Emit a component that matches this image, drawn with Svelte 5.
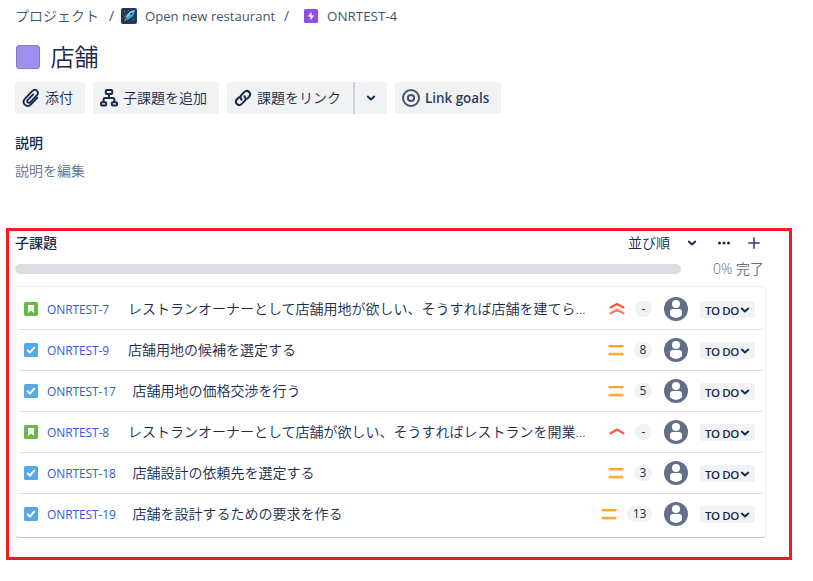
<script>
  const issues = [
    { key: 'ONRTEST-7', type: 'story', title: 'レストランオーナーとして店舗用地が欲しい、そうすれば店舗を建てら...', gap: 128, priority: 'highest', points: '-' },
    { key: 'ONRTEST-9', type: 'task', title: '店舗用地の候補を選定する', gap: 128, priority: 'medium', points: '8' },
    { key: 'ONRTEST-17', type: 'task', title: '店舗用地の価格交渉を行う', gap: 132.5, priority: 'medium', points: '5' },
    { key: 'ONRTEST-8', type: 'story', title: 'レストランオーナーとして店舗が欲しい、そうすればレストランを開業...', gap: 128, priority: 'high', points: '-' },
    { key: 'ONRTEST-18', type: 'task', title: '店舗設計の依頼先を選定する', gap: 132.5, priority: 'medium', points: '3' },
    { key: 'ONRTEST-19', type: 'task', title: '店舗を設計するための要求を作る', gap: 132.5, priority: 'medium', points: '13' }
  ];
</script>

{#snippet chevron()}
  <svg class="chev" width="10" height="8" viewBox="0 0 10 8"><path d="M1.8 2.6 5 5.4 8.2 2.6" fill="none" stroke="currentColor" stroke-width="2" stroke-linecap="round" stroke-linejoin="round" /></svg>
{/snippet}

<main>
  <nav>
    <span class="c1">プロジェクト</span>
    <span class="s1">/</span>
    <svg class="rocket" width="16" height="16" viewBox="0 0 16 16">
      <rect width="16" height="16" rx="2" fill="#243858" />
      <path d="M3 8.7 5.6 6.5 8.5 9.8 6.7 12.8 6 10.3 4.5 9.2Z" fill="#2684b8" />
      <path d="M13.8 2C9.6 2.2 6.3 5.2 5 9.2l1.9 1.9C11 9.6 13.7 6.4 13.8 2Z" fill="#79c7e3" />
      <path d="M13.8 2 5.8 10.1l1.1 1C11 9.6 13.7 6.4 13.8 2Z" fill="#42a5ce" />
      <circle cx="10.3" cy="5.8" r="1.1" fill="#243858" />
      <path d="M4.8 10 3 13.2l3.3-1.7Z" fill="#c78a7c" />
      <path d="M3 3h1v1H3zM12 11h1v1h-1zM7 2h.7v.7H7z" fill="#7a8ba8" />
    </svg>
    <span class="c2">Open new restaurant</span>
    <span class="s2">/</span>
    <svg class="epic" width="14" height="14" viewBox="0 0 14 14"><rect width="14" height="14" rx="1.6" fill="#904ee2" /><path d="M7.5 2.8 3.8 7.4h2.7v3.8l3.8-4.7H7.5Z" fill="#fff" /></svg>
    <span class="c3">ONRTEST-4</span>
  </nav>

  <header><i></i><h1>店舗</h1></header>

  <div class="actions">
    <button class="attach">
      <svg width="20" height="20" viewBox="0 0 20 20" fill="none" stroke="currentColor" stroke-width="1.9" stroke-linecap="round"><path d="M12.2 6.4 6.8 11.9c-1.7 1.8.6 4.1 2.3 2.4l6.6-6.8c3.2-3.4-1.2-7.6-4.5-4.3L4.3 10.3c-4.5 4.8 1.4 10.3 5.9 5.8l6.1-6.3" /></svg>
      <span>添付</span>
    </button>
    <button class="child">
      <svg width="20" height="20" viewBox="0 0 20 20" fill="none" stroke="currentColor" stroke-width="2" stroke-linejoin="round"><rect x="6.8" y="2" width="6.4" height="4" rx="1" /><rect x="2" y="14.2" width="5.2" height="3.2" rx="1" /><rect x="12.8" y="14.2" width="5.2" height="3.2" rx="1" /><path d="M10 6v4M4.6 14v-2.6q0-1.4 1.4-1.4h8q1.4 0 1.4 1.4V14" /></svg>
      <span>子課題を追加</span>
    </button>
    <div class="split">
      <button class="link">
        <svg width="20" height="20" viewBox="0 0 20 20" fill="none" stroke="currentColor" stroke-width="2" stroke-linecap="round"><path d="M8.6 11.8C6.8 10 7.3 8 8.6 6.7l2.7-2.6c3.3-3.1 7.9 1.3 4.8 4.6l-2.2 2.2" /><path d="M11.4 8.2c1.8 1.8 1.3 3.8 0 5.1l-2.7 2.6c-3.3 3.1-7.9-1.3-4.8-4.6l2.2-2.2" /></svg>
        <span>課題をリンク</span>
      </button>
      <button class="more">{@render chevron()}</button>
    </div>
    <button class="goals">
      <svg width="20" height="20" viewBox="0 0 20 20" fill="none" stroke="#44546f" stroke-width="2"><circle cx="10" cy="10" r="8" /><circle cx="10" cy="10" r="3.1" /></svg>
      <span>Link goals</span>
    </button>
  </div>

  <h2>説明</h2>
  <p>説明を編集</p>

  <section>
    <div class="head">
      <h2>子課題</h2>
      <div class="tools">
        <span class="sort">並び順</span>
        {@render chevron()}
        <svg class="dots" width="14" height="6" viewBox="0 0 14 6" fill="currentColor"><circle cx="2.5" cy="3" r="1.5" /><circle cx="7" cy="3" r="1.5" /><circle cx="11.5" cy="3" r="1.5" /></svg>
        <svg class="plus" width="12" height="12" viewBox="0 0 12 12"><path d="M6 .8v10.4M.8 6h10.4" stroke="#2c3e5d" stroke-width="1.5" stroke-linecap="round" /></svg>
      </div>
    </div>
    <div class="progress"><div class="bar"></div><span>0% 完了</span></div>
    <ul>
      {#each issues as issue}
        <li>
          <svg class="type" width="14" height="14" viewBox="0 0 14 14">
            {#if issue.type === 'story'}
              <rect width="14" height="14" rx="1.6" fill="#68b946" /><path d="M4 3h6v8L7 8.5 4 11Z" fill="#fff" /><path d="M6 5h2v2.4H6Z" fill="#d9eecf" />
            {:else}
              <rect width="14" height="14" rx="1.6" fill="#55aae5" /><path d="m3.7 7.3 2.2 2.2 4.3-4.9" fill="none" stroke="#fff" stroke-width="1.9" stroke-linecap="round" stroke-linejoin="round" />
            {/if}
          </svg>
          <a style:width="{issue.gap - 47}px">{issue.key}</a>
          <span class="title">{issue.title}</span>
          <svg class="prio" width="16" height="16" viewBox="0 0 16 16" fill="none" stroke-linecap="round" stroke-linejoin="round">
            {#if issue.priority === 'medium'}
              <path d="M1 4.3h14M1 11.9h14" stroke="#ffd08a" stroke-width="2.8" stroke-linecap="butt" /><path d="M1.2 3.9h13.6M1.2 12.2h13.6" stroke="#fba528" stroke-width="2" />
            {:else if issue.priority === 'highest'}
              <path d="m1.6 6.4 6.4-3.4 6.4 3.4" stroke="#ff5630" stroke-width="2.3" /><path d="m1.6 12.2 6.4-3.4 6.4 3.4" stroke="#ff7c5e" stroke-width="2.3" />
            {:else}
              <path d="m1.6 9.2 6.4-3.6 6.4 3.6" stroke="#ff5c40" stroke-width="2.3" />
            {/if}
          </svg>
          <span class="points" class:dash={issue.points === '-'} class:wide={issue.points.length > 1}>{issue.points}</span>
          <svg class="avatar" width="24" height="24" viewBox="0 0 24 24"><circle cx="12" cy="12" r="12" fill="#626f86" /><circle cx="12" cy="7" r="4" fill="#fff" /><path d="M6 15q0-3 3-3h6q3 0 3 3v3.3q-2.6 2.7-6 2.7t-6-2.7Z" fill="#fff" /></svg>
          <span class="status"><b>TO DO</b>{@render chevron()}</span>
        </li>
      {/each}
    </ul>
  </section>
</main>

<style>
  :global(body) { margin: 0; background: #fff; }
  main { box-sizing: border-box; width: 813px; height: 581px; overflow: hidden; font: 350 14px/20px "Open Sans", "Noto Sans CJK JP", sans-serif; color: #172b4d; white-space: nowrap; }
  * { box-sizing: border-box; }
  svg { display: block; flex: none; }
  nav { display: flex; align-items: center; height: 32px; padding-left: 15px; color: #44546f; font-weight: 400; }
  nav span { flex: none; }
  .c1 { width: 94px; font-weight: 350; }
  .s1 { width: 12px; }
  .c2 { width: 139px; margin-left: 8px; font-size: 13.1px; }
  .s2 { width: 20px; }
  .c3 { margin-left: 9px; font-size: 13.4px; }
  header { display: flex; align-items: center; height: 50px; padding-left: 16px; }
  header i { width: 24px; height: 24px; border: 1px solid #8777c9; border-radius: 3px; background: #9f8fef; }
  h1 { margin: -1px 0 0 10.5px; font-size: 24px; font-weight: 350; line-height: 28px; }
  .actions { display: flex; gap: 8px; height: 32px; padding-left: 15px; }
  button { display: flex; align-items: center; height: 32px; padding: 0 0 0 6px; border: 0; border-radius: 3px; background: #f1f2f4; font: inherit; color: #172b4d; }
  button span { margin-left: 4px; }
  .attach { width: 70px; }
  .child { width: 126px; }
  .split { display: flex; width: 160px; }
  .link { width: 126px; border-radius: 3px 0 0 3px; }
  .more { width: 34px; padding-left: 11px; border-left: 2px solid #cfd2d9; border-radius: 0 3px 3px 0; }
  .goals { width: 106px; }
  .goals span { font-size: 13.4px; font-weight: 550; color: #2c3e5d; }
  h2 { margin: 0; font-size: 14px; font-weight: 500; line-height: 20px; }
  main > h2 { margin: 19px 0 0 15px; }
  p { margin: 8px 0 0 15px; color: #626f86; }
  section { width: 786px; height: 332px; margin: 47px 0 0 6px; padding-left: 6px; border: 3px solid #ed1c24; }
  .head { display: flex; align-items: center; justify-content: space-between; width: 750px; height: 24px; }
  .tools { display: flex; align-items: center; width: 137px; }
  .sort { width: 59px; }
  .dots { margin-left: 20px; }
  .plus { margin-left: 17px; }
  .progress { display: flex; align-items: center; height: 28px; color: #626f86; }
  .bar { width: 666px; height: 10px; margin-right: 32px; border-radius: 5px; background: #dcdde3; }
  ul { width: 751px; height: 252px; margin: 3px 0 0; padding: 2px 2px 0; border: 1px solid #eff0f2; border-bottom: 1px solid #c3c8d1; border-radius: 4px; list-style: none; }
  li { display: flex; align-items: center; height: 41px; padding: 0 8px 0 6px; border-bottom: 1px solid #dcdfe4; border-radius: 3px; }
  li:last-child { border-bottom-color: transparent; }
  .type { margin-right: 9px; }
  a { flex: none; padding-top: 1px; font-size: 12px; font-weight: 400; letter-spacing: -.12px; color: #2f5bd8; }
  .title { flex: 1; min-width: 0; }
  .prio { margin-right: 10px; }
  .points { width: 18px; height: 16px; border-radius: 8px; background: #f1f2f4; font-size: 12px; font-weight: 400; line-height: 16px; text-align: center; }
  .points.dash { width: 17px; }
  .points.wide { width: 25px; }
  .avatar { margin: 0 12px; }
  .status { display: flex; align-items: center; width: 55px; height: 17px; padding-left: 5px; border-radius: 3px; background: #f1f2f4; }
  .status b { width: 35px; padding-top: 3px; font-size: 11.5px; font-weight: 600; line-height: 16px; letter-spacing: -.45px; }
  .status :global(svg) { margin-top: 1px; }
</style>
